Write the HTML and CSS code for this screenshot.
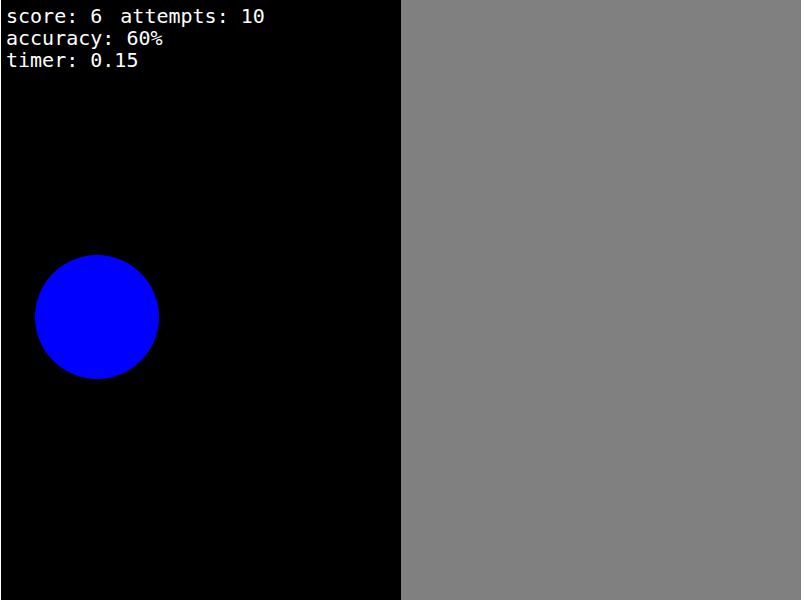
FILE: index.html
```html
<!DOCTYPE html>
<html>
<head>
<meta charset="utf-8">
<link rel="stylesheet" href="styles.css">
</head>
<body>
<div class="game">
  <div class="field">
    <div class="hud">
      <div class="row"><span>score: 6</span><span class="attempts">attempts: 10</span></div>
      <div class="row">accuracy: 60%</div>
      <div class="row">timer: 0.15</div>
    </div>
    <div class="target"></div>
  </div>
  <div class="side"></div>
</div>
</body>
</html>
```
FILE: styles.css
```css
html, body {
  margin: 0;
  padding: 0;
  background: #ffffff;
}
.game {
  display: flex;
  margin-left: 1px;
  height: 600px;
}
.field {
  position: relative;
  width: 400px;
  height: 600px;
  background: #000000;
}
.side {
  width: 400px;
  height: 600px;
  background: #808080;
}
.hud {
  padding: 5px 0 0 5px;
  color: #ffffff;
  font-family: "DejaVu Sans Mono", monospace;
  font-size: 20px;
  line-height: 22px;
}
.row {
  display: flex;
  white-space: nowrap;
}
.attempts {
  margin-left: 18px;
}
.target {
  position: absolute;
  left: 34px;
  top: 255px;
  width: 124px;
  height: 124px;
  border-radius: 50%;
  background: #0000ff;
}
```
